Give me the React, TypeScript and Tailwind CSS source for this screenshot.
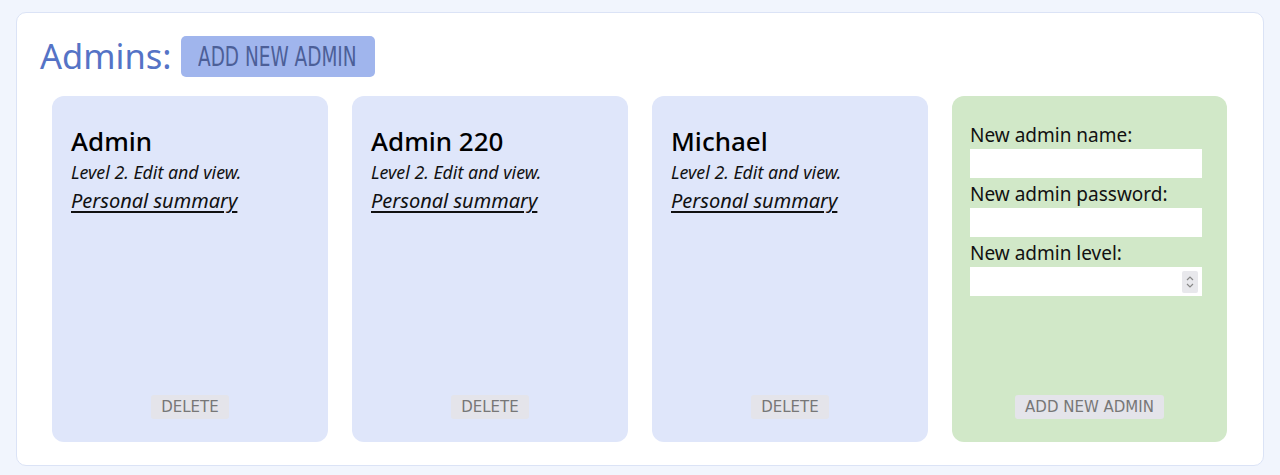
import React from "react";

const admins = [
  { name: "Admin", level: "Level 2. Edit and view." },
  { name: "Admin 220", level: "Level 2. Edit and view." },
  { name: "Michael", level: "Level 2. Edit and view." },
];

const AdminCard = ({ admin }: any) => (
  <div className="flex h-[346px] w-[276px] flex-col rounded-[12px] bg-[#dfe6fa] px-[19px] pt-[27px] pb-[23px]">
    <h2 className="text-[26px] font-medium leading-[36px] text-black">{admin.name}</h2>
    <p className="mt-[1px] text-[17.8px] italic leading-[24px] text-[#111]">
      {admin.level}
    </p>
    <a className="mt-[3px] text-[20px] italic leading-[28px] text-[#111] underline underline-offset-[3px]">
      Personal summary
    </a>
    <div className="mt-auto flex justify-center">
      <button className="rounded-[3px] bg-[#e4e4ea] px-[10px] py-[2px] text-[15px] leading-[20px] text-[#777] font-['DejaVu_Sans',sans-serif]">
        DELETE
      </button>
    </div>
  </div>
);

const NewAdminCard = () => (
  <div className="flex h-[346px] w-[275px] flex-col rounded-[12px] bg-[#d1e8c8] px-[18px] pt-[26px] pb-[23px]">
    <label className="text-[19px] leading-[27px] text-[#111]">
      New admin name:
    </label>
    <input className="h-[29px] w-[232px] bg-white outline-none" />
    <label className="mt-[3px] text-[19px] leading-[27px] text-[#111]">
      New admin password:
    </label>
    <input type="password" className="h-[29px] w-[232px] bg-white outline-none" />
    <label className="mt-[3px] text-[19px] leading-[27px] text-[#111]">
      New admin level:
    </label>
    <div className="flex h-[29px] w-[232px] items-center justify-end bg-white pr-[4px]">
      <span className="flex h-[22px] w-[16px] flex-col items-center justify-center rounded-[2px] bg-[#e8e8ec]">
        <svg width="10" height="16" viewBox="0 0 10 16" fill="none" stroke="#888" strokeWidth="1.2">
          <path d="M2 6 L5 3 L8 6" />
          <path d="M2 10 L5 13 L8 10" />
        </svg>
      </span>
    </div>
    <div className="mt-auto flex justify-center">
      <button className="rounded-[3px] bg-[#e4e4ea] px-[10px] py-[2px] text-[15px] leading-[20px] text-[#777] font-['DejaVu_Sans',sans-serif]">
        ADD NEW ADMIN
      </button>
    </div>
  </div>
);

export default function App() {
  return (
    <div className="h-[475px] w-[1280px] bg-[#f1f5fd] px-[16px] pt-[12px] font-['Noto_Sans',sans-serif]">
      <div className="h-[454px] rounded-[10px] border border-[#dbe3f6] bg-white">
        <div className="flex items-center px-[23px] pt-[22px]">
          <h1 className="text-[34.5px] leading-[42px] text-[#5573c6]">Admins:</h1>
          <button className="ml-[9px] flex h-[41px] w-[194px] items-center justify-center overflow-hidden rounded-[5px] bg-[#a0b5ed] text-[#4c5f98]">
            <span className="inline-block shrink-0 scale-x-[0.76] text-[27px] font-light leading-[41px] whitespace-nowrap font-['DejaVu_Sans_Condensed','DejaVu_Sans',sans-serif]">
              ADD NEW ADMIN
            </span>
          </button>
        </div>
        <div className="mt-[19px] flex gap-[24px] px-[35px]">
          {admins.map((admin) => (
            <AdminCard key={admin.name} admin={admin} />
          ))}
          <NewAdminCard />
        </div>
      </div>
    </div>
  );
}
